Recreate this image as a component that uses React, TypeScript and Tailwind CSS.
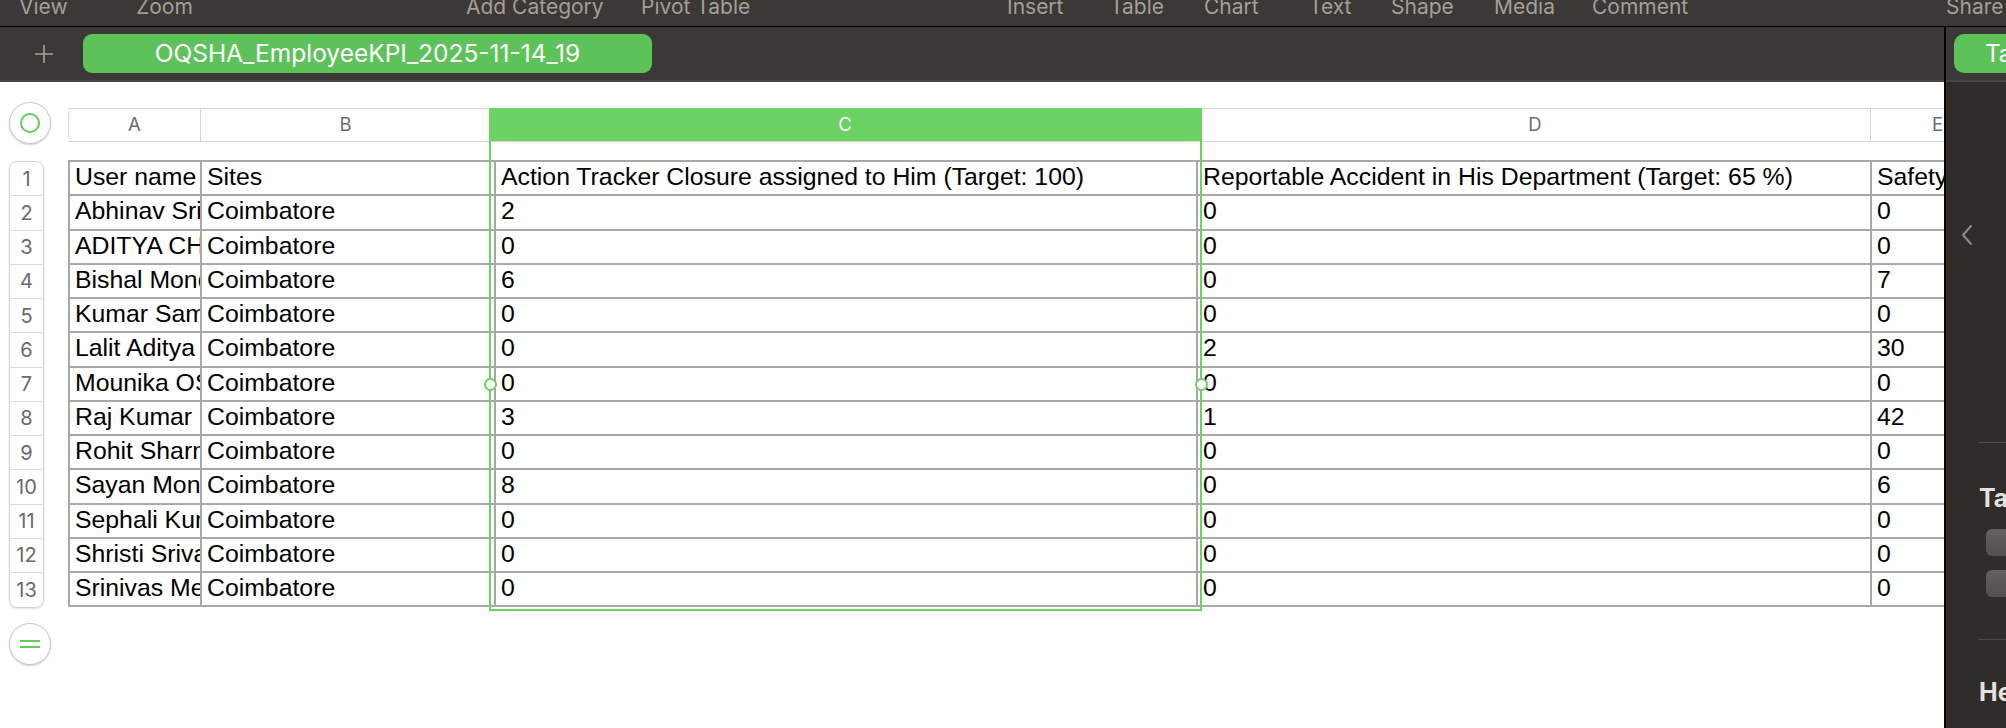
import React from 'react';

const menu = [
  { label: 'View', cls: 'w-[117px]' },
  { label: 'Zoom', cls: 'w-[330px]' },
  { label: 'Add Category', cls: 'w-[175px]' },
  { label: 'Pivot Table', cls: 'w-[366px]' },
  { label: 'Insert', cls: 'w-[103px]' },
  { label: 'Table', cls: 'w-[94px]' },
  { label: 'Chart', cls: 'w-[105px]' },
  { label: 'Text', cls: 'w-[82px]' },
  { label: 'Shape', cls: 'w-[103px]' },
  { label: 'Media', cls: 'w-[98px]' },
  { label: 'Comment', cls: 'w-[354px] text-[#6b6764]' },
  { label: 'Share', cls: 'w-[120px]' },
];

const rows = [
  ['User name', 'Sites', 'Action Tracker Closure assigned to Him (Target: 100)', 'Reportable Accident in His Department (Target: 65 %)', 'Safety Observations (Target: 50)'],
  ['Abhinav Srivastava', 'Coimbatore', '2', '0', '0'],
  ['ADITYA CHAKRABORTY', 'Coimbatore', '0', '0', '0'],
  ['Bishal Mondal', 'Coimbatore', '6', '0', '7'],
  ['Kumar Sambhav', 'Coimbatore', '0', '0', '0'],
  ['Lalit Aditya', 'Coimbatore', '0', '2', '30'],
  ['Mounika OSHA', 'Coimbatore', '0', '0', '0'],
  ['Raj Kumar', 'Coimbatore', '3', '1', '42'],
  ['Rohit Sharma', 'Coimbatore', '0', '0', '0'],
  ['Sayan Mondal', 'Coimbatore', '8', '0', '6'],
  ['Sephali Kumari', 'Coimbatore', '0', '0', '0'],
  ['Shristi Srivastava', 'Coimbatore', '0', '0', '0'],
  ['Srinivas Menon', 'Coimbatore', '0', '0', '0'],
];

// widths include the 2px left grid line
const cellW = ['w-[132px]', 'w-[294px]', 'w-[702px]', 'w-[674px]', 'w-[200px]'];

export default function App() {
  return (
    <div className="w-[2006px] h-[728px] overflow-hidden flex flex-col bg-white font-['Inter',sans-serif]">
      {/* top toolbar labels (icons scrolled off) */}
      <div className="h-[27px] shrink-0 bg-[#3c3835] border-b border-black flex pl-[19px] overflow-hidden">
        {menu.map((m) => (
          <div key={m.label} className={`shrink-0 -mt-[4px] text-[21px] leading-[21px] text-[#a39f9b] whitespace-nowrap ${m.cls}`}>
            {m.label}
          </div>
        ))}
      </div>

      <div className="flex flex-1 min-h-0">
        {/* main area */}
        <div className="flex-1 min-w-0 flex flex-col">
          {/* sheet tabs */}
          <div className="h-[55px] shrink-0 bg-[#3c3835] border-b-2 border-[#4a4643] flex items-start pt-[7px]">
            <div className="w-[83px] h-[39px] flex items-center justify-center pl-[4px]">
              <svg width="20" height="20" viewBox="0 0 20 20">
                <path d="M10 1v18M1 10h18" stroke="#a8a4a0" strokeWidth="1.6" />
              </svg>
            </div>
            <div className="w-[569px] h-[39px] rounded-[9px] bg-[#5ec25a] text-white text-[24.5px] flex items-center justify-center">
              OQSHA_EmployeeKPI_2025-11-14_19
            </div>
          </div>

          {/* canvas */}
          <div className="relative flex-1 overflow-hidden flex">
            {/* left gutter */}
            <div className="w-[68px] shrink-0 pl-[9px] pt-[20px] flex flex-col">
              <div className="w-[42px] h-[42px] rounded-full bg-white border border-[#c8c8c8] shadow-[0_1px_2px_rgba(0,0,0,0.18)] flex items-center justify-center">
                <div className="w-[20px] h-[20px] rounded-full border-2 border-[#62cc5a]" />
              </div>
              <div className="mt-[17px] w-[35px] rounded-[8px] border border-[#d4d4d4] shadow-[0_1px_2px_rgba(0,0,0,0.12)] bg-white overflow-hidden">
                {rows.map((_, i) => (
                  <div
                    key={i}
                    className={`h-[34.25px] flex items-center justify-center text-[20px] text-[#6a6a6a] ${i < rows.length - 1 ? 'border-b border-[#dcdcdc]' : ''}`}
                  >
                    {i + 1}
                  </div>
                ))}
              </div>
              <div className="mt-[15px] w-[42px] h-[42px] rounded-full bg-white border border-[#c8c8c8] shadow-[0_1px_2px_rgba(0,0,0,0.18)] flex flex-col items-center justify-center gap-[4px]">
                <div className="w-[20px] h-[2px] bg-[#62cc5a]" />
                <div className="w-[20px] h-[2px] bg-[#62cc5a]" />
              </div>
            </div>

            {/* table */}
            <div className="flex-1 pt-[26px] flex flex-col">
              {/* column letters */}
              <div className="h-[34px] flex border-y border-[#d6d6d6] text-[18.5px] text-[#6e6e6e] w-[2100px]">
                <div className="w-[132px] shrink-0 border-l border-[#d6d6d6] rounded-l-[6px] flex items-center justify-center">A</div>
                <div className="w-[290px] shrink-0 border-l border-[#d6d6d6] flex items-center justify-center">B</div>
                <div className="w-[710px] shrink-0 bg-[#6bd263] text-white flex items-center justify-center">C</div>
                <div className="w-[670px] shrink-0 flex items-center justify-center">D</div>
                <div className="w-[134px] shrink-0 border-l border-[#d6d6d6] flex items-center justify-center">E</div>
                <div className="flex-1 border-l border-[#d6d6d6]" />
              </div>

              <div className="mt-[18px] w-[2100px] border-t-2 border-[#a8a8a8] font-['Liberation_Sans',Arial,sans-serif] text-[24.8px] text-black">
                {rows.map((r, i) => (
                  <div key={i} className="h-[34.25px] flex border-b-2 border-[#a8a8a8]">
                    {r.map((c, j) => (
                      <div
                        key={j}
                        className={`${cellW[j]} shrink-0 border-l-2 border-[#a8a8a8] pl-[5px] leading-[28px] pt-[1px] whitespace-nowrap overflow-hidden`}
                      >
                        {c}
                      </div>
                    ))}
                  </div>
                ))}
              </div>
            </div>

            {/* selected column C */}
            <div className="absolute left-[489px] top-[26px] w-[713px] h-[503px] border-2 border-[#6bd263] pointer-events-none" />
            <div className="absolute left-[484px] top-[296px] w-[13px] h-[13px] rounded-full bg-white border-2 border-[#6bd263]" />
            <div className="absolute left-[1195px] top-[296px] w-[13px] h-[13px] rounded-full bg-white border-2 border-[#6bd263]" />
          </div>
        </div>

        {/* format sidebar, mostly cut off */}
        <div className="w-[62px] shrink-0 border-l-2 border-black bg-[#2f2c29] flex flex-col overflow-hidden">
          <div className="h-[55px] shrink-0 bg-[#3c3835] border-b-2 border-[#4a4643] pt-[7px] pl-[8px]">
            <div className="h-[39px] w-[120px] rounded-l-[10px] bg-[#5ec25a] text-white text-[24px] leading-[39px] pl-[31px] whitespace-nowrap">
              Table
            </div>
          </div>
          <div className="mt-[143px] ml-[15px]">
            <svg width="12" height="20" viewBox="0 0 12 20">
              <path d="M10 1 2 10l8 9" fill="none" stroke="#8e8a86" strokeWidth="2" strokeLinecap="round" strokeLinejoin="round" />
            </svg>
          </div>
          <div className="mt-[197px] ml-[32px] h-px w-[60px] bg-[#4a4744]" />
          <div className="mt-[40px] ml-[33px] text-[25px] leading-[30px] font-bold text-[#e4e2e0] whitespace-nowrap">Table Styles</div>
          <div className="mt-[16px] ml-[40px] h-[27px] w-[60px] rounded-[6px] bg-gradient-to-b from-[#63605d] to-[#52504d]" />
          <div className="mt-[14px] ml-[40px] h-[27px] w-[60px] rounded-[6px] bg-gradient-to-b from-[#63605d] to-[#52504d]" />
          <div className="mt-[42px] ml-[32px] h-px w-[60px] bg-[#4a4744]" />
          <div className="mt-[37px] ml-[33px] text-[25px] leading-[30px] font-bold text-[#e4e2e0] whitespace-nowrap">Headers &amp; Footer</div>
        </div>
      </div>
    </div>
  );
}
